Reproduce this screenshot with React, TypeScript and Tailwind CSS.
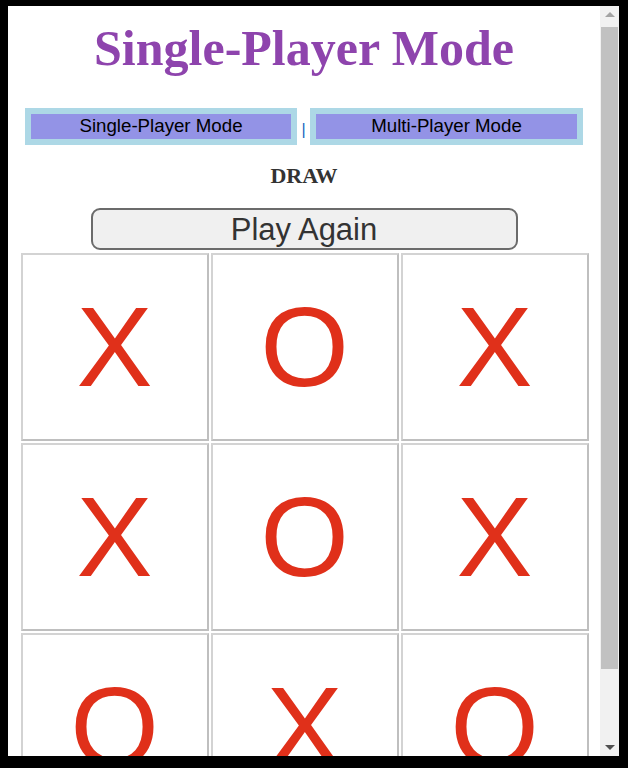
import React from "react";

const cells = ["X", "O", "X", "X", "O", "X", "O", "X", "O"];

export default function App() {
  return (
    <div className="w-[628px] h-[768px] bg-black pt-[6px] pl-[8px] overflow-hidden">
      <div className="flex w-[611px] h-[750px] bg-white overflow-hidden">
        <div className="w-[592px] h-[750px] overflow-hidden flex flex-col items-center">
          <h1
            className="shrink-0 pt-[17px] text-[50px] leading-none font-bold text-[#8e44ad]"
            style={{ fontFamily: '"Liberation Serif", "Times New Roman", serif' }}
          >
            Single-Player Mode
          </h1>
          <div
            className="shrink-0 mt-[35px] flex items-center text-[18.7px] text-black"
            style={{ fontFamily: '"Liberation Sans", Arial, sans-serif' }}
          >
            <div className="w-[272px] h-[37px] border-[6px] border-[#add8e6] bg-[#9393e6] flex items-center justify-center leading-none">
              Single-Player Mode
            </div>
            <div className="w-[13px] text-center text-[16px] text-[#1565c0] leading-none pt-[6px]">|</div>
            <div className="w-[273px] h-[37px] border-[6px] border-[#add8e6] bg-[#9393e6] flex items-center justify-center leading-none">
              Multi-Player Mode
            </div>
          </div>
          <div
            className="shrink-0 mt-[19px] text-[22px] leading-[24px] font-bold text-[#333333]"
            style={{ fontFamily: '"Liberation Serif", "Times New Roman", serif' }}
          >
            DRAW
          </div>
          <button
            className="shrink-0 mt-[20px] w-[427px] h-[42px] rounded-[9px] border-2 border-[#6b6b6b] bg-[#f0f0f0] text-[31px] leading-none text-[#333333] flex items-center justify-center"
            style={{ fontFamily: '"Liberation Sans", Arial, sans-serif' }}
          >
            Play Again
          </button>
          <div className="shrink-0 mt-[3px] ml-[1px] grid grid-cols-[188px_188px_188px] gap-[2px]">
            {cells.map((c, i) => (
              <div
                key={i}
                className="w-[188px] h-[188px] border-2 border-t-[#d3d3d3] border-l-[#d3d3d3] border-r-[#bfbfbf] border-b-[#bfbfbf] flex items-center justify-center text-[114px] leading-none text-[#e0301a]"
                style={{ fontFamily: '"Liberation Sans", Arial, sans-serif' }}
              >
                {c}
              </div>
            ))}
          </div>
        </div>
        <div className="w-[19px] h-[750px] bg-[#f1f1f1] flex flex-col items-center">
          <div className="shrink-0 h-[17px] w-full flex items-center justify-center">
            <div className="w-0 h-0 border-l-[5px] border-r-[5px] border-b-[5px] border-l-transparent border-r-transparent border-b-[#a3a3a3]" />
          </div>
          <div className="shrink-0 mt-[4px] w-[17px] h-[642px] bg-[#c1c1c1]" />
          <div className="flex-1" />
          <div className="shrink-0 h-[17px] w-full flex items-center justify-center">
            <div className="w-0 h-0 border-l-[5px] border-r-[5px] border-t-[5px] border-l-transparent border-r-transparent border-t-[#505050]" />
          </div>
        </div>
      </div>
    </div>
  );
}
